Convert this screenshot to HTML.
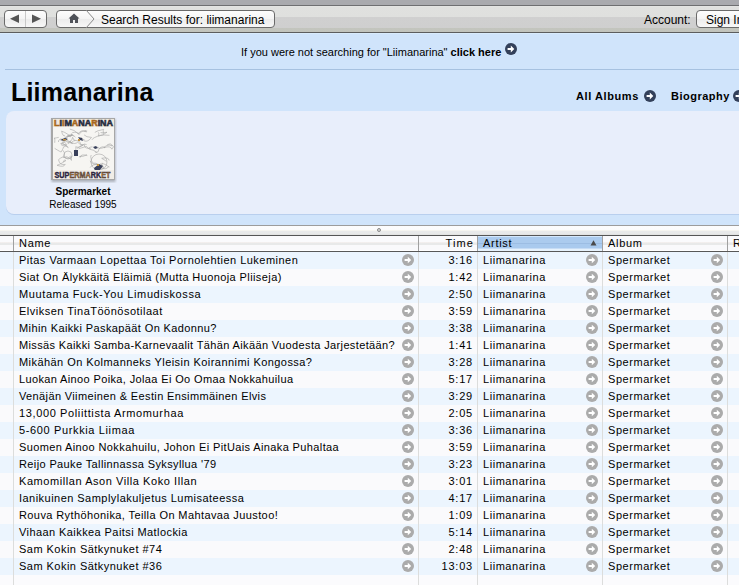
<!DOCTYPE html>
<html><head><meta charset="utf-8"><style>
*{margin:0;padding:0;box-sizing:border-box}
html,body{width:739px;height:585px;overflow:hidden;background:#fbfbfd}
body{position:relative;font-family:"Liberation Sans",sans-serif;color:#000}
.abs{position:absolute}
#band{left:0;top:0;width:739px;height:5px;background:#a9aaae}
#bandline{left:0;top:5px;width:739px;height:1px;background:#6e6f71}
#tool{left:0;top:6px;width:739px;height:26px;background:linear-gradient(#e6e7e5 0,#e0e1df 1px,#dfe0de 11px,#d0d0d0 11px,#cfcfcf 22px,#c3c5be 22px,#c2c4bd 26px)}
#toolline{left:0;top:32px;width:739px;height:1px;background:#5c5d5e}
#blue{left:0;top:33px;width:739px;height:192px;background:linear-gradient(#d9ecfd 0,#d9ecfd 1px,#d0e4fb 1px)}
.btn{position:absolute;top:10px;height:18px;border:1px solid #6a6a6a;border-radius:4px;background:linear-gradient(#fdfdfd 0,#f4f4f4 50%,#ececec 51%,#f7f7f7 100%)}
#nav{left:4px;width:43px}
#nav .div{position:absolute;left:20px;top:0;width:1px;height:16px;background:#c8c8c8}
#crumb{left:56px;width:219px}
#signin{left:696px;width:60px}
.tb{position:absolute;font-size:12px;top:12px;line-height:16px;white-space:nowrap}
#sep{left:5px;top:69px;width:734px;height:1px;background:#a6c1e0}
#notice{left:241px;top:46px;font-size:11px;line-height:13px;white-space:nowrap}
#h1{left:11px;top:78px;font-size:25px;font-weight:bold;line-height:28px;white-space:nowrap;letter-spacing:0.2px}
.lnk{position:absolute;top:89px;font-size:11px;font-weight:bold;line-height:14px;white-space:nowrap}
#panel{left:6px;top:111px;width:760px;height:103px;border-radius:8px;background:#e8eefb;box-shadow:0 1px 0 #b9cfee}
#art{left:52px;top:118px;width:63px;height:63px;background:#f4f2ee;border:2px solid #a9a9a9;box-shadow:0 1px 2px rgba(0,0,0,.35)}
#alb1{left:0;top:186px;width:166px;text-align:center;font-size:10px;font-weight:bold;line-height:12px}
#alb2{left:0;top:199px;width:166px;text-align:center;font-size:10px;line-height:12px}
#split{left:0;top:225px;width:739px;height:11px;border-top:1px solid #9c9c9c;border-bottom:1px solid #555;background:linear-gradient(#fcfcfd 0,#fbfbfc 4px,#f5f4ef 4px,#f5f4ef 5px,#e9eaea 5px,#e8e9e9 8px,#e2e3e2 8px)}
#dot{left:377px;top:228px;width:4px;height:4px;border:1px solid #8a8a8a;border-radius:50%;background:#d8d8d8}
#hdr{left:0;top:236px;width:739px;height:16px;border-bottom:1px solid #585858;background:linear-gradient(#fafafc 0,#fafafc 6px,#f3efee 6px,#f1eeed 7px,#e8e9e9 7px,#e8e9e9 9px,#f9f9fb 9px,#f9f9fb 14px,#fff 14px)}
#hart{left:478px;top:236px;width:124px;height:15px;background:linear-gradient(#d4e8fc 0,#d4e8fc 1px,#abcbee 1px,#abcbee 7px,#9cbde3 7px,#9cbde3 8px,#a9caee 8px,#a9caee 12px,#c6dcf5 12px,#c6dcf5 13px,#e6f2fc 13px)}
.h{position:absolute;top:236px;font-size:11px;line-height:14px;white-space:nowrap;letter-spacing:0.7px}
.vl{position:absolute;top:252px;width:1px;height:333px;background:#dcdddc}
.hvl{position:absolute;top:236px;width:1px;height:15px;background:#a0a0a0}
.r{position:absolute;left:0;width:739px;height:17px;background:#fafafc;font-size:11px;line-height:17px;white-space:nowrap}
.odd{background:#ecf5fe}
.r span{position:absolute;top:0}
.nm{left:19px}
.tm{right:266px;text-align:right;letter-spacing:0.8px}
.art{left:483px;letter-spacing:0.55px}
.alb{left:608px;letter-spacing:0.55px}
.a1,.a2,.a3{top:2px!important;width:12px;height:12px;line-height:0}
.a1{left:402px}
.a2{left:586px}
.a3{left:711px}
</style></head><body>
<div id="band" class="abs"></div>
<div id="bandline" class="abs"></div>
<div id="tool" class="abs"></div>
<div id="toolline" class="abs"></div>
<div id="nav" class="btn"><div class="div"></div></div>
<svg style="position:absolute;left:0;top:0" width="60" height="33" viewBox="0 0 60 33"><path d="M10 18.7L19 14.4V23z" fill="#555"/><path d="M32 14.4L41 18.7L32 23z" fill="#555"/></svg>
<div id="crumb" class="btn">
<svg style="position:absolute;left:11px;top:2px" width="12" height="11" viewBox="0 0 12 11"><path d="M6 0.5L0.5 5.5H2V10h3V7h2v3h3V5.5h1.5z" fill="#4f5259"/></svg>
<svg style="position:absolute;left:28px;top:-1px" width="12" height="18" viewBox="0 0 12 18"><path d="M1 0L9 9 1 18" fill="none" stroke="#8a8a8a" stroke-width="1"/></svg>
</div>
<div class="tb" style="left:101px">Search Results for: liimanarina</div>
<div class="tb" style="left:644px">Account:</div>
<div id="signin" class="btn"></div>
<div class="tb" style="left:706px">Sign In</div>
<div id="blue" class="abs"></div>
<div id="notice" class="abs">If you were not searching for "Liimanarina" <b>click here</b></div>
<div class="abs" style="left:505px;top:43px;width:12px;height:12px;line-height:0"><svg width="12" height="12" viewBox="0 0 12 12"><circle cx="6" cy="6" r="6" fill="#33405a"/><path d="M2.6 5h3.2V2.6l3.5 3.4-3.5 3.4V7H2.6z" fill="#fff"/></svg></div>
<div id="sep" class="abs"></div>
<div id="h1" class="abs">Liimanarina</div>
<div class="lnk" style="left:576px;letter-spacing:0.59px">All Albums</div>
<div class="abs" style="left:644px;top:90px;width:12px;height:12px;line-height:0"><svg width="12" height="12" viewBox="0 0 12 12"><circle cx="6" cy="6" r="6" fill="#33405a"/><path d="M2.6 5h3.2V2.6l3.5 3.4-3.5 3.4V7H2.6z" fill="#fff"/></svg></div>
<div class="lnk" style="left:671px;letter-spacing:0.5px">Biography</div>
<div class="abs" style="left:733px;top:90px;width:12px;height:12px;line-height:0"><svg width="12" height="12" viewBox="0 0 12 12"><circle cx="6" cy="6" r="6" fill="#33405a"/><path d="M2.6 5h3.2V2.6l3.5 3.4-3.5 3.4V7H2.6z" fill="#fff"/></svg></div>
<div id="panel" class="abs"></div>
<svg class="abs" style="left:50px;top:117px" width="67" height="66" viewBox="0 0 67 66">
<defs><filter id="sh" x="-20%" y="-20%" width="140%" height="140%"><feGaussianBlur stdDeviation="0.8"/></filter></defs>
<rect x="1.5" y="2" width="64" height="63" fill="#000" opacity="0.25" filter="url(#sh)"/>
<rect x="1" y="1" width="64" height="62" fill="#a7a7a7"/>
<rect x="3" y="2" width="61" height="60" fill="#f6f5f2"/>
<rect x="3" y="2" width="61" height="8" fill="#efe8dc"/>
<text x="4" y="9.3" font-family="Liberation Sans" font-weight="bold" font-size="9.5" textLength="59" lengthAdjust="spacingAndGlyphs" fill="#262b3e" stroke="#262b3e" stroke-width="0.6"><tspan fill="#a8691e" stroke="#a8691e">L</tspan>I<tspan fill="#a8691e" stroke="#a8691e">I</tspan>M<tspan fill="#a8691e" stroke="#a8691e">A</tspan>NA<tspan fill="#a8691e" stroke="#a8691e">R</tspan>INA</text>
<g fill="none" stroke="#a4a4a4" stroke-width="0.6"><path d="M22.8 18.0Q15.5 20.3 14.7 21.2Q15.1 19.2 22.1 18.4Q16.2 19.2 17.4 18.9Q22.1 16.1 25.4 20.2M37.2 14.0Q31.4 12.9 29.0 17.6Q28.1 14.1 22.2 15.7M37.0 37.6Q33.9 39.6 29.7 39.7Q31.9 39.6 29.7 40.0Q31.5 36.7 37.3 38.6M47.9 15.3Q50.0 15.5 48.3 19.0Q52.0 19.2 57.0 15.2Q50.2 16.5 50.7 15.1M47.1 34.9Q45.6 36.5 44.2 33.4Q38.5 33.0 36.4 29.4Q31.0 31.1 28.6 31.7M42.5 29.8Q37.6 30.4 40.4 31.5Q33.9 31.7 34.4 27.7Q30.2 29.4 27.8 25.2Q24.4 28.0 20.2 24.7M50.1 46.6Q53.4 48.0 53.8 51.4Q48.6 50.6 48.9 47.3Q42.0 47.2 40.1 50.6M13.0 33.4Q15.1 35.8 14.2 37.9Q11.7 42.0 16.3 39.7Q21.2 40.7 21.4 43.4Q21.5 37.9 19.5 39.5M8.7 20.4Q3.2 21.4 4.0 21.4Q5.2 20.2 4.7 25.8M16.4 27.0Q13.1 23.3 12.0 25.5Q14.8 27.9 18.3 30.5Q13.3 26.6 10.8 26.5Q9.9 28.4 16.7 23.1M34.1 17.9Q36.2 20.3 41.5 20.4Q38.0 25.4 34.1 23.9Q33.2 22.5 31.5 21.1Q35.1 23.8 34.0 22.3M15.7 21.6Q18.0 19.1 20.1 18.8Q14.0 14.6 11.6 14.1Q12.9 19.9 15.0 18.7M59.3 50.2Q55.3 46.9 51.8 46.2Q52.5 44.7 51.5 51.1Q56.3 53.0 58.8 49.5M11.6 27.5Q11.3 29.7 16.1 27.3Q18.4 28.0 13.1 30.3Q14.0 29.9 11.3 34.8Q11.2 35.5 4.6 31.3M13.0 45.1Q14.8 41.4 15.9 43.6Q12.7 46.1 7.1 48.3Q14.0 50.6 14.9 47.6M16.6 22.1Q15.2 23.7 16.6 24.7Q21.6 25.7 22.6 20.3Q24.2 24.5 25.6 23.5M53.3 17.2Q53.0 12.3 53.7 12.4Q46.6 13.7 44.8 15.4M44.9 34.3Q46.4 36.6 48.2 34.6Q49.1 28.7 55.1 30.1Q47.7 33.0 47.8 29.7M8.5 25.0Q7.7 23.6 10.4 22.0Q11.1 22.2 15.9 22.1Q22.7 27.4 22.7 26.4Q19.4 25.3 17.3 25.8M22.4 38.8Q20.8 42.9 14.7 40.5Q12.9 38.8 8.5 42.7Q9.7 48.7 15.4 47.4M26.9 31.5Q29.3 29.9 32.9 28.1Q30.0 28.4 30.0 25.1Q25.2 21.5 21.3 25.6Q19.9 22.7 18.3 26.8M59.2 43.5Q58.7 39.8 51.7 41.3Q56.8 44.3 56.3 44.5M57.0 28.2Q61.1 25.3 62.0 28.9Q57.4 26.5 54.0 30.8Q60.4 28.2 61.9 32.2Q64.9 29.6 62.0 27.8M23.7 34.1Q26.4 35.3 25.8 29.6Q27.5 31.8 34.3 27.2Q33.1 26.9 36.6 27.5M42.0 22.8Q42.6 20.6 50.9 18.2Q53.1 17.8 59.5 18.3M41.2 38.0Q40.3 39.7 41.1 41.4Q41.5 46.4 44.5 46.2Q45.6 45.6 48.2 47.5Q40.8 47.6 40.2 43.8M19.1 18.5Q20.6 21.7 22.0 17.3Q19.3 15.8 23.8 19.3M19.8 12.1Q24.3 12.5 28.1 16.9Q31.2 11.9 36.5 15.0Q35.4 12.4 34.4 14.7"/><circle cx="49" cy="45" r="8"/><circle cx="18" cy="38" r="4"/></g>
<g fill="#39405a">
<path d="M10 23l5-2 3 1-4 2zM28 20l4 1 1 3-3-1z"/>
<rect x="24" y="33" width="4" height="6"/>
<path d="M44 51l5-4 4 2-3 4-5 1z"/>
<path d="M43 30l3-1 2 2-3 1z"/>
</g>
<g fill="#c8953f"><rect x="13" y="22" width="3" height="1.5"/><rect x="28" y="22" width="2" height="2"/><rect x="47" y="47" width="2" height="2"/></g>
<rect x="3" y="53" width="61" height="9" fill="#f1ede6"/>
<text x="4.5" y="60.5" font-family="Liberation Sans" font-weight="bold" font-size="8.5" textLength="56" lengthAdjust="spacingAndGlyphs" fill="#2b2440" stroke="#2b2440" stroke-width="0.4">SUP<tspan fill="#b07a2c">ERMA</tspan>RK<tspan fill="#b07a2c">ET</tspan></text>
</svg>
<div id="alb1" class="abs">Spermarket</div>
<div id="alb2" class="abs">Released 1995</div>
<div id="split" class="abs"></div>
<div id="dot" class="abs"></div>
<div id="hdr" class="abs"></div>
<div id="hart" class="abs"></div>
<div class="r odd" style="top:252px"><span class="nm" style="letter-spacing:0.479px">Pitas Varmaan Lopettaa Toi Pornolehtien Lukeminen</span><span class="a1"><svg class="ar" width="12" height="12" viewBox="0 0 12 12"><circle cx="6" cy="6" r="6" fill="#ababab"/><path d="M2.6 5h3.2V2.8l3.4 3.2-3.4 3.2V7H2.6z" fill="#fff"/></svg></span><span class="tm">3:16</span><span class="art">Liimanarina</span><span class="a2"><svg class="ar" width="12" height="12" viewBox="0 0 12 12"><circle cx="6" cy="6" r="6" fill="#ababab"/><path d="M2.6 5h3.2V2.8l3.4 3.2-3.4 3.2V7H2.6z" fill="#fff"/></svg></span><span class="alb">Spermarket</span><span class="a3"><svg class="ar" width="12" height="12" viewBox="0 0 12 12"><circle cx="6" cy="6" r="6" fill="#ababab"/><path d="M2.6 5h3.2V2.8l3.4 3.2-3.4 3.2V7H2.6z" fill="#fff"/></svg></span></div><div class="r" style="top:269px"><span class="nm" style="letter-spacing:0.4px">Siat On Älykkäitä Eläimiä (Mutta Huonoja Pliiseja)</span><span class="a1"><svg class="ar" width="12" height="12" viewBox="0 0 12 12"><circle cx="6" cy="6" r="6" fill="#ababab"/><path d="M2.6 5h3.2V2.8l3.4 3.2-3.4 3.2V7H2.6z" fill="#fff"/></svg></span><span class="tm">1:42</span><span class="art">Liimanarina</span><span class="a2"><svg class="ar" width="12" height="12" viewBox="0 0 12 12"><circle cx="6" cy="6" r="6" fill="#ababab"/><path d="M2.6 5h3.2V2.8l3.4 3.2-3.4 3.2V7H2.6z" fill="#fff"/></svg></span><span class="alb">Spermarket</span><span class="a3"><svg class="ar" width="12" height="12" viewBox="0 0 12 12"><circle cx="6" cy="6" r="6" fill="#ababab"/><path d="M2.6 5h3.2V2.8l3.4 3.2-3.4 3.2V7H2.6z" fill="#fff"/></svg></span></div><div class="r odd" style="top:286px"><span class="nm" style="letter-spacing:0.607px">Muutama Fuck-You Limudiskossa</span><span class="a1"><svg class="ar" width="12" height="12" viewBox="0 0 12 12"><circle cx="6" cy="6" r="6" fill="#ababab"/><path d="M2.6 5h3.2V2.8l3.4 3.2-3.4 3.2V7H2.6z" fill="#fff"/></svg></span><span class="tm">2:50</span><span class="art">Liimanarina</span><span class="a2"><svg class="ar" width="12" height="12" viewBox="0 0 12 12"><circle cx="6" cy="6" r="6" fill="#ababab"/><path d="M2.6 5h3.2V2.8l3.4 3.2-3.4 3.2V7H2.6z" fill="#fff"/></svg></span><span class="alb">Spermarket</span><span class="a3"><svg class="ar" width="12" height="12" viewBox="0 0 12 12"><circle cx="6" cy="6" r="6" fill="#ababab"/><path d="M2.6 5h3.2V2.8l3.4 3.2-3.4 3.2V7H2.6z" fill="#fff"/></svg></span></div><div class="r" style="top:303px"><span class="nm" style="letter-spacing:0.496px">Elviksen TinaTöönösotilaat</span><span class="a1"><svg class="ar" width="12" height="12" viewBox="0 0 12 12"><circle cx="6" cy="6" r="6" fill="#ababab"/><path d="M2.6 5h3.2V2.8l3.4 3.2-3.4 3.2V7H2.6z" fill="#fff"/></svg></span><span class="tm">3:59</span><span class="art">Liimanarina</span><span class="a2"><svg class="ar" width="12" height="12" viewBox="0 0 12 12"><circle cx="6" cy="6" r="6" fill="#ababab"/><path d="M2.6 5h3.2V2.8l3.4 3.2-3.4 3.2V7H2.6z" fill="#fff"/></svg></span><span class="alb">Spermarket</span><span class="a3"><svg class="ar" width="12" height="12" viewBox="0 0 12 12"><circle cx="6" cy="6" r="6" fill="#ababab"/><path d="M2.6 5h3.2V2.8l3.4 3.2-3.4 3.2V7H2.6z" fill="#fff"/></svg></span></div><div class="r odd" style="top:320px"><span class="nm" style="letter-spacing:0.388px">Mihin Kaikki Paskapäät On Kadonnu?</span><span class="a1"><svg class="ar" width="12" height="12" viewBox="0 0 12 12"><circle cx="6" cy="6" r="6" fill="#ababab"/><path d="M2.6 5h3.2V2.8l3.4 3.2-3.4 3.2V7H2.6z" fill="#fff"/></svg></span><span class="tm">3:38</span><span class="art">Liimanarina</span><span class="a2"><svg class="ar" width="12" height="12" viewBox="0 0 12 12"><circle cx="6" cy="6" r="6" fill="#ababab"/><path d="M2.6 5h3.2V2.8l3.4 3.2-3.4 3.2V7H2.6z" fill="#fff"/></svg></span><span class="alb">Spermarket</span><span class="a3"><svg class="ar" width="12" height="12" viewBox="0 0 12 12"><circle cx="6" cy="6" r="6" fill="#ababab"/><path d="M2.6 5h3.2V2.8l3.4 3.2-3.4 3.2V7H2.6z" fill="#fff"/></svg></span></div><div class="r" style="top:337px"><span class="nm" style="letter-spacing:0.364px">Missäs Kaikki Samba-Karnevaalit Tähän Aikään Vuodesta Jarjestetään?</span><span class="a1"><svg class="ar" width="12" height="12" viewBox="0 0 12 12"><circle cx="6" cy="6" r="6" fill="#ababab"/><path d="M2.6 5h3.2V2.8l3.4 3.2-3.4 3.2V7H2.6z" fill="#fff"/></svg></span><span class="tm">1:41</span><span class="art">Liimanarina</span><span class="a2"><svg class="ar" width="12" height="12" viewBox="0 0 12 12"><circle cx="6" cy="6" r="6" fill="#ababab"/><path d="M2.6 5h3.2V2.8l3.4 3.2-3.4 3.2V7H2.6z" fill="#fff"/></svg></span><span class="alb">Spermarket</span><span class="a3"><svg class="ar" width="12" height="12" viewBox="0 0 12 12"><circle cx="6" cy="6" r="6" fill="#ababab"/><path d="M2.6 5h3.2V2.8l3.4 3.2-3.4 3.2V7H2.6z" fill="#fff"/></svg></span></div><div class="r odd" style="top:354px"><span class="nm" style="letter-spacing:0.443px">Mikähän On Kolmanneks Yleisin Koirannimi Kongossa?</span><span class="a1"><svg class="ar" width="12" height="12" viewBox="0 0 12 12"><circle cx="6" cy="6" r="6" fill="#ababab"/><path d="M2.6 5h3.2V2.8l3.4 3.2-3.4 3.2V7H2.6z" fill="#fff"/></svg></span><span class="tm">3:28</span><span class="art">Liimanarina</span><span class="a2"><svg class="ar" width="12" height="12" viewBox="0 0 12 12"><circle cx="6" cy="6" r="6" fill="#ababab"/><path d="M2.6 5h3.2V2.8l3.4 3.2-3.4 3.2V7H2.6z" fill="#fff"/></svg></span><span class="alb">Spermarket</span><span class="a3"><svg class="ar" width="12" height="12" viewBox="0 0 12 12"><circle cx="6" cy="6" r="6" fill="#ababab"/><path d="M2.6 5h3.2V2.8l3.4 3.2-3.4 3.2V7H2.6z" fill="#fff"/></svg></span></div><div class="r" style="top:371px"><span class="nm" style="letter-spacing:0.366px">Luokan Ainoo Poika, Jolaa Ei Oo Omaa Nokkahuilua</span><span class="a1"><svg class="ar" width="12" height="12" viewBox="0 0 12 12"><circle cx="6" cy="6" r="6" fill="#ababab"/><path d="M2.6 5h3.2V2.8l3.4 3.2-3.4 3.2V7H2.6z" fill="#fff"/></svg></span><span class="tm">5:17</span><span class="art">Liimanarina</span><span class="a2"><svg class="ar" width="12" height="12" viewBox="0 0 12 12"><circle cx="6" cy="6" r="6" fill="#ababab"/><path d="M2.6 5h3.2V2.8l3.4 3.2-3.4 3.2V7H2.6z" fill="#fff"/></svg></span><span class="alb">Spermarket</span><span class="a3"><svg class="ar" width="12" height="12" viewBox="0 0 12 12"><circle cx="6" cy="6" r="6" fill="#ababab"/><path d="M2.6 5h3.2V2.8l3.4 3.2-3.4 3.2V7H2.6z" fill="#fff"/></svg></span></div><div class="r odd" style="top:388px"><span class="nm" style="letter-spacing:0.372px">Venäjän Viimeinen &amp; Eestin Ensimmäinen Elvis</span><span class="a1"><svg class="ar" width="12" height="12" viewBox="0 0 12 12"><circle cx="6" cy="6" r="6" fill="#ababab"/><path d="M2.6 5h3.2V2.8l3.4 3.2-3.4 3.2V7H2.6z" fill="#fff"/></svg></span><span class="tm">3:29</span><span class="art">Liimanarina</span><span class="a2"><svg class="ar" width="12" height="12" viewBox="0 0 12 12"><circle cx="6" cy="6" r="6" fill="#ababab"/><path d="M2.6 5h3.2V2.8l3.4 3.2-3.4 3.2V7H2.6z" fill="#fff"/></svg></span><span class="alb">Spermarket</span><span class="a3"><svg class="ar" width="12" height="12" viewBox="0 0 12 12"><circle cx="6" cy="6" r="6" fill="#ababab"/><path d="M2.6 5h3.2V2.8l3.4 3.2-3.4 3.2V7H2.6z" fill="#fff"/></svg></span></div><div class="r" style="top:405px"><span class="nm" style="letter-spacing:0.625px">13,000 Poliittista Armomurhaa</span><span class="a1"><svg class="ar" width="12" height="12" viewBox="0 0 12 12"><circle cx="6" cy="6" r="6" fill="#ababab"/><path d="M2.6 5h3.2V2.8l3.4 3.2-3.4 3.2V7H2.6z" fill="#fff"/></svg></span><span class="tm">2:05</span><span class="art">Liimanarina</span><span class="a2"><svg class="ar" width="12" height="12" viewBox="0 0 12 12"><circle cx="6" cy="6" r="6" fill="#ababab"/><path d="M2.6 5h3.2V2.8l3.4 3.2-3.4 3.2V7H2.6z" fill="#fff"/></svg></span><span class="alb">Spermarket</span><span class="a3"><svg class="ar" width="12" height="12" viewBox="0 0 12 12"><circle cx="6" cy="6" r="6" fill="#ababab"/><path d="M2.6 5h3.2V2.8l3.4 3.2-3.4 3.2V7H2.6z" fill="#fff"/></svg></span></div><div class="r odd" style="top:422px"><span class="nm" style="letter-spacing:0.632px">5-600 Purkkia Liimaa</span><span class="a1"><svg class="ar" width="12" height="12" viewBox="0 0 12 12"><circle cx="6" cy="6" r="6" fill="#ababab"/><path d="M2.6 5h3.2V2.8l3.4 3.2-3.4 3.2V7H2.6z" fill="#fff"/></svg></span><span class="tm">3:36</span><span class="art">Liimanarina</span><span class="a2"><svg class="ar" width="12" height="12" viewBox="0 0 12 12"><circle cx="6" cy="6" r="6" fill="#ababab"/><path d="M2.6 5h3.2V2.8l3.4 3.2-3.4 3.2V7H2.6z" fill="#fff"/></svg></span><span class="alb">Spermarket</span><span class="a3"><svg class="ar" width="12" height="12" viewBox="0 0 12 12"><circle cx="6" cy="6" r="6" fill="#ababab"/><path d="M2.6 5h3.2V2.8l3.4 3.2-3.4 3.2V7H2.6z" fill="#fff"/></svg></span></div><div class="r" style="top:439px"><span class="nm" style="letter-spacing:0.38px">Suomen Ainoo Nokkahuilu, Johon Ei PitUais Ainaka Puhaltaa</span><span class="a1"><svg class="ar" width="12" height="12" viewBox="0 0 12 12"><circle cx="6" cy="6" r="6" fill="#ababab"/><path d="M2.6 5h3.2V2.8l3.4 3.2-3.4 3.2V7H2.6z" fill="#fff"/></svg></span><span class="tm">3:59</span><span class="art">Liimanarina</span><span class="a2"><svg class="ar" width="12" height="12" viewBox="0 0 12 12"><circle cx="6" cy="6" r="6" fill="#ababab"/><path d="M2.6 5h3.2V2.8l3.4 3.2-3.4 3.2V7H2.6z" fill="#fff"/></svg></span><span class="alb">Spermarket</span><span class="a3"><svg class="ar" width="12" height="12" viewBox="0 0 12 12"><circle cx="6" cy="6" r="6" fill="#ababab"/><path d="M2.6 5h3.2V2.8l3.4 3.2-3.4 3.2V7H2.6z" fill="#fff"/></svg></span></div><div class="r odd" style="top:456px"><span class="nm" style="letter-spacing:0.378px">Reijo Pauke Tallinnassa Syksyllua '79</span><span class="a1"><svg class="ar" width="12" height="12" viewBox="0 0 12 12"><circle cx="6" cy="6" r="6" fill="#ababab"/><path d="M2.6 5h3.2V2.8l3.4 3.2-3.4 3.2V7H2.6z" fill="#fff"/></svg></span><span class="tm">3:23</span><span class="art">Liimanarina</span><span class="a2"><svg class="ar" width="12" height="12" viewBox="0 0 12 12"><circle cx="6" cy="6" r="6" fill="#ababab"/><path d="M2.6 5h3.2V2.8l3.4 3.2-3.4 3.2V7H2.6z" fill="#fff"/></svg></span><span class="alb">Spermarket</span><span class="a3"><svg class="ar" width="12" height="12" viewBox="0 0 12 12"><circle cx="6" cy="6" r="6" fill="#ababab"/><path d="M2.6 5h3.2V2.8l3.4 3.2-3.4 3.2V7H2.6z" fill="#fff"/></svg></span></div><div class="r" style="top:473px"><span class="nm" style="letter-spacing:0.565px">Kamomillan Ason Villa Koko Illan</span><span class="a1"><svg class="ar" width="12" height="12" viewBox="0 0 12 12"><circle cx="6" cy="6" r="6" fill="#ababab"/><path d="M2.6 5h3.2V2.8l3.4 3.2-3.4 3.2V7H2.6z" fill="#fff"/></svg></span><span class="tm">3:01</span><span class="art">Liimanarina</span><span class="a2"><svg class="ar" width="12" height="12" viewBox="0 0 12 12"><circle cx="6" cy="6" r="6" fill="#ababab"/><path d="M2.6 5h3.2V2.8l3.4 3.2-3.4 3.2V7H2.6z" fill="#fff"/></svg></span><span class="alb">Spermarket</span><span class="a3"><svg class="ar" width="12" height="12" viewBox="0 0 12 12"><circle cx="6" cy="6" r="6" fill="#ababab"/><path d="M2.6 5h3.2V2.8l3.4 3.2-3.4 3.2V7H2.6z" fill="#fff"/></svg></span></div><div class="r odd" style="top:490px"><span class="nm" style="letter-spacing:0.464px">Ianikuinen Samplylakuljetus Lumisateessa</span><span class="a1"><svg class="ar" width="12" height="12" viewBox="0 0 12 12"><circle cx="6" cy="6" r="6" fill="#ababab"/><path d="M2.6 5h3.2V2.8l3.4 3.2-3.4 3.2V7H2.6z" fill="#fff"/></svg></span><span class="tm">4:17</span><span class="art">Liimanarina</span><span class="a2"><svg class="ar" width="12" height="12" viewBox="0 0 12 12"><circle cx="6" cy="6" r="6" fill="#ababab"/><path d="M2.6 5h3.2V2.8l3.4 3.2-3.4 3.2V7H2.6z" fill="#fff"/></svg></span><span class="alb">Spermarket</span><span class="a3"><svg class="ar" width="12" height="12" viewBox="0 0 12 12"><circle cx="6" cy="6" r="6" fill="#ababab"/><path d="M2.6 5h3.2V2.8l3.4 3.2-3.4 3.2V7H2.6z" fill="#fff"/></svg></span></div><div class="r" style="top:507px"><span class="nm" style="letter-spacing:0.4px">Rouva Rythöhonika, Teilla On Mahtavaa Juustoo!</span><span class="a1"><svg class="ar" width="12" height="12" viewBox="0 0 12 12"><circle cx="6" cy="6" r="6" fill="#ababab"/><path d="M2.6 5h3.2V2.8l3.4 3.2-3.4 3.2V7H2.6z" fill="#fff"/></svg></span><span class="tm">1:09</span><span class="art">Liimanarina</span><span class="a2"><svg class="ar" width="12" height="12" viewBox="0 0 12 12"><circle cx="6" cy="6" r="6" fill="#ababab"/><path d="M2.6 5h3.2V2.8l3.4 3.2-3.4 3.2V7H2.6z" fill="#fff"/></svg></span><span class="alb">Spermarket</span><span class="a3"><svg class="ar" width="12" height="12" viewBox="0 0 12 12"><circle cx="6" cy="6" r="6" fill="#ababab"/><path d="M2.6 5h3.2V2.8l3.4 3.2-3.4 3.2V7H2.6z" fill="#fff"/></svg></span></div><div class="r odd" style="top:524px"><span class="nm" style="letter-spacing:0.42px">Vihaan Kaikkea Paitsi Matlockia</span><span class="a1"><svg class="ar" width="12" height="12" viewBox="0 0 12 12"><circle cx="6" cy="6" r="6" fill="#ababab"/><path d="M2.6 5h3.2V2.8l3.4 3.2-3.4 3.2V7H2.6z" fill="#fff"/></svg></span><span class="tm">5:14</span><span class="art">Liimanarina</span><span class="a2"><svg class="ar" width="12" height="12" viewBox="0 0 12 12"><circle cx="6" cy="6" r="6" fill="#ababab"/><path d="M2.6 5h3.2V2.8l3.4 3.2-3.4 3.2V7H2.6z" fill="#fff"/></svg></span><span class="alb">Spermarket</span><span class="a3"><svg class="ar" width="12" height="12" viewBox="0 0 12 12"><circle cx="6" cy="6" r="6" fill="#ababab"/><path d="M2.6 5h3.2V2.8l3.4 3.2-3.4 3.2V7H2.6z" fill="#fff"/></svg></span></div><div class="r" style="top:541px"><span class="nm" style="letter-spacing:0.465px">Sam Kokin Sätkynuket #74</span><span class="a1"><svg class="ar" width="12" height="12" viewBox="0 0 12 12"><circle cx="6" cy="6" r="6" fill="#ababab"/><path d="M2.6 5h3.2V2.8l3.4 3.2-3.4 3.2V7H2.6z" fill="#fff"/></svg></span><span class="tm">2:48</span><span class="art">Liimanarina</span><span class="a2"><svg class="ar" width="12" height="12" viewBox="0 0 12 12"><circle cx="6" cy="6" r="6" fill="#ababab"/><path d="M2.6 5h3.2V2.8l3.4 3.2-3.4 3.2V7H2.6z" fill="#fff"/></svg></span><span class="alb">Spermarket</span><span class="a3"><svg class="ar" width="12" height="12" viewBox="0 0 12 12"><circle cx="6" cy="6" r="6" fill="#ababab"/><path d="M2.6 5h3.2V2.8l3.4 3.2-3.4 3.2V7H2.6z" fill="#fff"/></svg></span></div><div class="r odd" style="top:558px"><span class="nm" style="letter-spacing:0.465px">Sam Kokin Sätkynuket #36</span><span class="a1"><svg class="ar" width="12" height="12" viewBox="0 0 12 12"><circle cx="6" cy="6" r="6" fill="#ababab"/><path d="M2.6 5h3.2V2.8l3.4 3.2-3.4 3.2V7H2.6z" fill="#fff"/></svg></span><span class="tm">13:03</span><span class="art">Liimanarina</span><span class="a2"><svg class="ar" width="12" height="12" viewBox="0 0 12 12"><circle cx="6" cy="6" r="6" fill="#ababab"/><path d="M2.6 5h3.2V2.8l3.4 3.2-3.4 3.2V7H2.6z" fill="#fff"/></svg></span><span class="alb">Spermarket</span><span class="a3"><svg class="ar" width="12" height="12" viewBox="0 0 12 12"><circle cx="6" cy="6" r="6" fill="#ababab"/><path d="M2.6 5h3.2V2.8l3.4 3.2-3.4 3.2V7H2.6z" fill="#fff"/></svg></span></div>
<div class="hvl" style="left:13px"></div><div class="hvl" style="left:418px"></div><div class="hvl" style="left:477px"></div><div class="hvl" style="left:602px"></div><div class="hvl" style="left:727px"></div>
<div class="vl" style="left:13px"></div>
<div class="vl" style="left:418px"></div>
<div class="vl" style="left:477px"></div>
<div class="vl" style="left:602px"></div>
<div class="vl" style="left:727px"></div>
<div class="h" style="left:19px">Name</div>
<div class="h" style="right:265px;letter-spacing:1.1px">Time</div>
<div class="h" style="left:483px">Artist</div>
<svg style="position:absolute;left:590px;top:240px" width="7" height="6" viewBox="0 0 7 6"><path d="M3.5 0.3L6.5 5.6H0.5z" fill="#4a4a4a"/></svg>
<div class="h" style="left:608px">Album</div>
<div class="h" style="left:733px">R</div>
</body></html>
